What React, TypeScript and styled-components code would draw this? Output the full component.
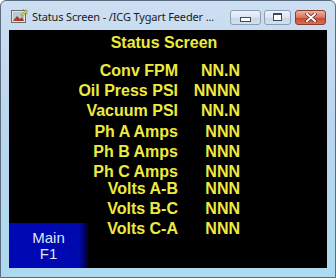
import styled, { createGlobalStyle } from "styled-components";

const GlobalStyle = createGlobalStyle`
  html, body {
    margin: 0;
    padding: 0;
    background: #ffffff;
  }
`;

const Window = styled.div`
  width: 336px;
  height: 278px;
  box-sizing: border-box;
  border: 1px solid #5b6b80;
  border-radius: 6px 6px 0 0;
  background: linear-gradient(to bottom, #cddff2 0%, #bcd6ee 40%, #addaf0 100%);
  display: flex;
  flex-direction: column;
  overflow: hidden;
`;

const TitleBar = styled.div`
  height: 29px;
  display: flex;
  align-items: center;
  padding: 0 9px 0 10px;
  gap: 4px;
`;

const TitleText = styled.div`
  flex: 1;
  min-width: 0;
  overflow: hidden;
  font-family: "Noto Sans", "DejaVu Sans", sans-serif;
  font-size: 11px;
  letter-spacing: -0.15px;
  color: #1c1c1c;
  white-space: nowrap;
  margin-top: 2px;
`;

const Controls = styled.div`
  display: flex;
  align-items: center;
  margin-top: 3px;
`;

const CtrlButton = styled.div<{ $w: number; $close?: boolean }>`
  width: ${(p) => p.$w}px;
  height: 15px;
  box-sizing: border-box;
  border: 1px solid ${(p) => (p.$close ? "#8e3b2c" : "#8a9db6")};
  border-radius: 3px;
  background: ${(p) =>
    p.$close
      ? "linear-gradient(to bottom, #eab2a4 0%, #d8735f 50%, #c54a33 55%, #d2705b 100%)"
      : "linear-gradient(to bottom, #eef3fa 0%, #d9e4f1 50%, #c8d6e7 55%, #d5e1ef 100%)"};
  display: flex;
  align-items: center;
  justify-content: center;
  margin-left: ${(p) => (p.$close ? 4 : 3)}px;
  &:first-child {
    margin-left: 0;
  }
`;

const MinGlyph = styled.div`
  width: 9px;
  height: 3px;
  margin-top: 4px;
  background: #ffffff;
  border: 1px solid #3c4a5c;
`;

const MaxGlyph = styled.div`
  width: 7px;
  height: 5px;
  background: #ffffff;
  border: 1px solid #3c4a5c;
  border-top-width: 2px;
  box-sizing: content-box;
`;

const Client = styled.div`
  margin: 0 8px 0 8px;
  height: 238px;
  background: #000000;
  display: grid;
  grid-template-columns: 79px 1fr;
  grid-template-rows: auto 1fr;
  font-family: "Liberation Sans", Arial, sans-serif;
`;

const Heading = styled.div`
  grid-column: 1 / -1;
  grid-row: 1;
  text-align: center;
  padding: 3px 8px 0 0;
  font-size: 16px;
  line-height: 20px;
  font-weight: bold;
  color: #ecea3e;
`;

const Readings = styled.div`
  grid-column: 1 / -1;
  grid-row: 2;
  display: grid;
  grid-template-columns: 169px 62px;
  grid-auto-rows: min-content;
  align-content: start;
  margin-top: 8px;
  font-size: 16px;
  line-height: 20px;
  font-weight: bold;
  color: #ecea3e;
`;

const Cell = styled.div<{ $shift: number }>`
  text-align: right;
  white-space: nowrap;
  margin-top: ${(p) => p.$shift}px;
`;

const MainButton = styled.div`
  grid-column: 1;
  grid-row: 2;
  align-self: end;
  height: 45px;
  background: linear-gradient(to right, #0008b4 0%, #0008b0 88%, #00005a 97%, #000020 100%);
  display: flex;
  flex-direction: column;
  align-items: center;
  justify-content: center;
  color: #dfe6f4;
  font-size: 15px;
  line-height: 16px;
  padding-top: 1px;
  box-sizing: border-box;
`;

const BottomEdge = styled.div`
  flex: 1;
`;

const readings = [
  { label: "Conv FPM", value: "NN.N", shift: 0 },
  { label: "Oil Press PSI", value: "NNNN", shift: 0 },
  { label: "Vacuum PSI", value: "NN.N", shift: 0 },
  { label: "Ph A Amps", value: "NNN", shift: 1 },
  { label: "Ph B Amps", value: "NNN", shift: 0 },
  { label: "Ph C Amps", value: "NNN", shift: 0 },
  { label: "Volts A-B", value: "NNN", shift: -3 },
  { label: "Volts B-C", value: "NNN", shift: 0 },
  { label: "Volts C-A", value: "NNN", shift: 0 },
];

const AppIcon = () => (
  <svg width="17" height="16" viewBox="0 0 17 16">
    <rect x="0.5" y="2.5" width="14" height="12" fill="#e9e4dc" stroke="#6c6c6c" />
    <rect x="2" y="4" width="11" height="9" fill="#b8c8d8" />
    <path d="M2 13 L6 8 L9 11 L11 9 L13 13 Z" fill="#9a3d2a" />
    <circle cx="5" cy="11.5" r="1.6" fill="#c83a2a" />
    <path d="M10 7 L15 1.5 L16.5 3 L11.5 8.5 Z" fill="#e6d23a" stroke="#6a8a2a" strokeWidth="0.6" />
    <path d="M12 1 L13 2.5 M15 5 L16.5 6" stroke="#7aa832" strokeWidth="1" />
  </svg>
);

const CloseGlyph = () => (
  <svg width="12" height="9" viewBox="0 0 12 9">
    <path d="M2 1 L10 8 M10 1 L2 8" stroke="#5a2018" strokeWidth="3.4" strokeLinecap="round" />
    <path d="M2 1 L10 8 M10 1 L2 8" stroke="#ffffff" strokeWidth="2" strokeLinecap="round" />
  </svg>
);

const App = () => (
  <>
    <GlobalStyle />
    <Window>
      <TitleBar>
        <AppIcon />
        <TitleText>Status Screen - /ICG Tygart Feeder ...</TitleText>
        <Controls>
          <CtrlButton $w={31}>
            <MinGlyph />
          </CtrlButton>
          <CtrlButton $w={27}>
            <MaxGlyph />
          </CtrlButton>
          <CtrlButton $w={31} $close>
            <CloseGlyph />
          </CtrlButton>
        </Controls>
      </TitleBar>
      <Client>
        <Heading>Status Screen</Heading>
        <Readings>
          {readings.map((r) => [
            <Cell key={r.label} $shift={r.shift}>
              {r.label}
            </Cell>,
            <Cell key={r.label + "-v"} $shift={r.shift}>
              {r.value}
            </Cell>,
          ])}
        </Readings>
        <MainButton>
          <span>Main</span>
          <span>F1</span>
        </MainButton>
      </Client>
      <BottomEdge />
    </Window>
  </>
);

export default App;
